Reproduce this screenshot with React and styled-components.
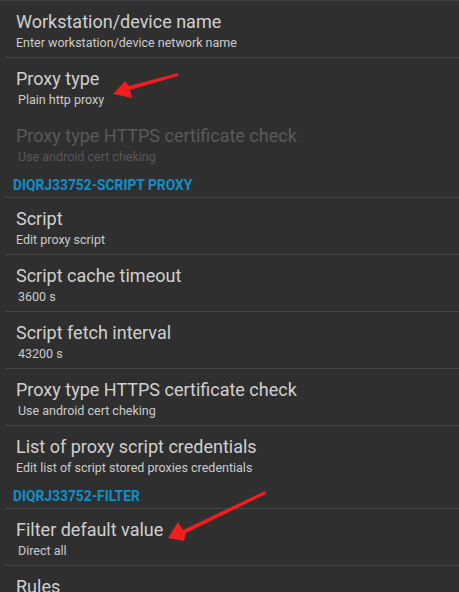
import styled, { createGlobalStyle } from "styled-components";

const GlobalStyle = createGlobalStyle`
  html, body {
    margin: 0;
    padding: 0;
    background: #2f2f2f;
    overflow: hidden;
  }
  body {
    font-family: Roboto, "Noto Sans", sans-serif;
  }
`;

const settings = [
  { type: "top" },
  { title: "Workstation/device name", summary: "Enter workstation/device network name" },
  { title: "Proxy type", summary: "Plain http proxy", indent: true, last: true },
  { title: "Proxy type HTTPS certificate check", summary: "Use android cert cheking", indent: true, disabled: true, last: true },
  { type: "header", title: "DIQRJ33752-SCRIPT PROXY" },
  { title: "Script", summary: "Edit proxy script" },
  { title: "Script cache timeout", summary: "3600 s", indent: true },
  { title: "Script fetch interval", summary: "43200 s", indent: true },
  { title: "Proxy type HTTPS certificate check", summary: "Use android cert cheking", indent: true },
  { title: "List of proxy script credentials", summary: "Edit list of script stored proxies credentials", last: true },
  { type: "header", title: "DIQRJ33752-FILTER" },
  { title: "Filter default value", summary: "Direct all", indent: true },
  { title: "Rules", summary: "Edit filter rules" },
];

const App = () => {
  return (
    <Screen>
      <GlobalStyle />
      <List>
        {settings.map((item, i) => {
          if (item.type === "top") return <TopLine key={i} />;
          if (item.type === "header") return <Header key={i}>{item.title}</Header>;
          return (
            <Row key={i} $last={item.last}>
              <Title $disabled={item.disabled}>{item.title}</Title>
              <Summary $disabled={item.disabled} $indent={item.indent}>
                {item.summary}
              </Summary>
            </Row>
          );
        })}
      </List>

      {/* red annotation arrows drawn over the screenshot */}
      <Arrow viewBox="0 0 459 592">
        <polygon points="178,73 129,86 125,81 113,94 132,98 130,90 178,76" />
        <polygon points="265,491 183,530 178,522 168,538 184,541 186,533 266,494" />
      </Arrow>
    </Screen>
  );
};

const Screen = styled.div`
  position: relative;
  width: 459px;
  height: 592px;
  overflow: hidden;
  background: #2f2f2f;
`;

const List = styled.div`
  display: flex;
  flex-direction: column;
`;

const TopLine = styled.div`
  height: 1px;
  background: #3f3f3f;
`;

const Row = styled.div`
  display: flex;
  flex-direction: column;
  flex-shrink: 0;
  height: 57px;
  box-sizing: border-box;
  margin-left: 5px;
  padding: 10px 0 0 11px;
  border-bottom: 1px solid ${(p) => (p.$last ? "transparent" : "#444444")};
`;

const Title = styled.div`
  font-size: 18px;
  line-height: 22px;
  color: ${(p) => (p.$disabled ? "#5a5a5a" : "#d0d0d0")};
  white-space: nowrap;
`;

const Summary = styled.div`
  font-size: 12.5px;
  line-height: 16px;
  margin-top: 2px;
  padding-left: ${(p) => (p.$indent ? "2px" : "0")};
  color: ${(p) => (p.$disabled ? "#575757" : "#cbcbcb")};
  white-space: nowrap;
`;

const Header = styled.div`
  flex-shrink: 0;
  height: 26px;
  box-sizing: border-box;
  margin-left: 5px;
  padding: 6px 0 0 8px;
  font-size: 13.8px;
  font-weight: bold;
  line-height: 15px;
  color: #0f90c9;
  border-bottom: 1px solid #444444;
`;

const Arrow = styled.svg`
  position: absolute;
  left: 0;
  top: 0;
  width: 459px;
  height: 592px;
  pointer-events: none;
  fill: #f01e1e;
`;

export default App;
